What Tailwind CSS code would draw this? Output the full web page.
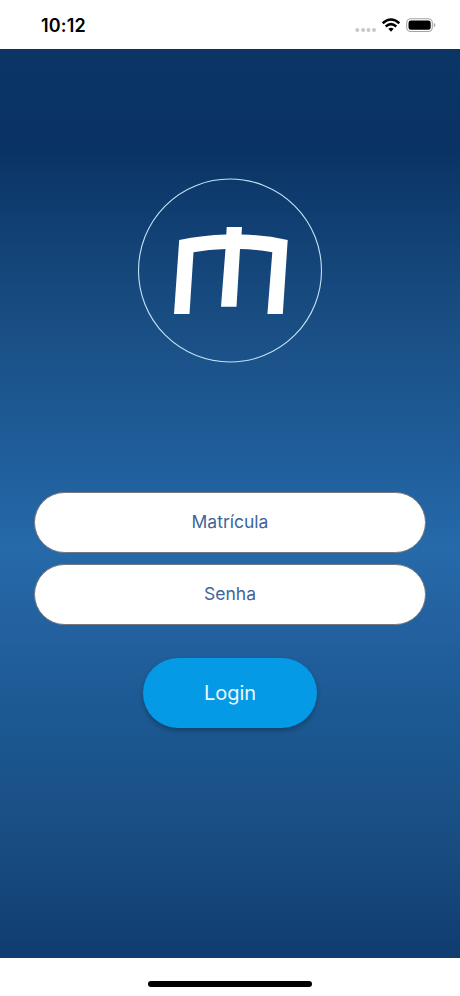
<!DOCTYPE html>
<html lang="pt-BR">
<head>
<meta charset="utf-8">
<title>Login</title>
<script src="https://cdn.jsdelivr.net/npm/@tailwindcss/browser@4"></script>
</head>
<body class="w-[460px] h-[996px] overflow-hidden bg-white font-[Inter,sans-serif] flex flex-col">
<header class="h-[49px] shrink-0 flex items-start justify-between pl-[41px] pr-[24px]">
  <span class="mt-[13px] text-[18px] leading-[25px] font-semibold text-black tracking-[0.15px]">10:12</span>
  <svg class="mt-[15px]" width="81" height="20" viewBox="355 15 81 20">
    <g fill="#c9c9c9"><circle cx="357.3" cy="30" r="2"/><circle cx="363.1" cy="30" r="2"/><circle cx="368.5" cy="30" r="2"/><circle cx="374" cy="30" r="2"/></g>
    <g fill="none" stroke="#000" stroke-width="2.5"><path d="M382.7 23.2Q391 15.8 399.3 23.2"/><path d="M385.7 26.5Q391 21.8 396.3 26.5"/></g>
    <path d="M388.3 28.8Q391 26.8 393.7 28.8L391 31.7Z"/>
    <rect x="406.7" y="18.7" width="25.6" height="12.8" rx="4" fill="none" stroke="#a3a3a3" stroke-width="1.1"/>
    <rect x="408.5" y="20.5" width="22.2" height="9.3" rx="2.4"/>
    <path d="M433.8 23v4.2Q435.4 26.6 435.4 25.1T433.8 23Z" fill="#a3a3a3"/>
  </svg>
</header>
<main class="h-[909px] shrink-0 flex flex-col items-center bg-[linear-gradient(180deg,#0b3565_0%,#0a3363_11%,#0f3c6f_17%,#194e83_30%,#2161a0_48%,#266aa9_55%,#2361a0_63%,#1c5993_73%,#194d82_87%,#103c70_100%)]">
  <svg class="mt-[128px] shrink-0" width="186" height="188" viewBox="137 177 186 188">
    <circle cx="230" cy="270.5" r="91.5" fill="none" stroke="#c4e3f7" stroke-width="1.1"/>
    <path fill="#fff" d="M179.2 240Q203 235 226.3 234.5L226.7 227H242L241.5 234.5Q265 235 287.7 240L282.8 314H267.4L272.3 252.3Q256 249.3 240 249L236.5 306.8H221L225.5 249Q209 249.5 193.5 252.3L189.5 314H174Z"/>
  </svg>
  <form class="mt-[127px] w-[392px] flex flex-col items-center">
    <input type="text" placeholder="Matrícula" aria-label="Matrícula" class="w-full h-[61px] rounded-full border border-[#76777c] bg-white px-6 pb-[3px] text-center text-[17.5px] text-[#3e6599] placeholder:text-[#3e6599] outline-none">
    <input type="password" placeholder="Senha" aria-label="Senha" class="mt-[11px] w-full h-[61px] rounded-full border border-[#76777c] bg-white px-6 pb-[3px] text-center text-[17.5px] text-[#3e6599] placeholder:text-[#3e6599] outline-none">
    <button type="button" class="mt-[33px] w-[174px] h-[70px] rounded-full bg-[#059ae5] text-[20px] text-[#edf8ff] shadow-[0_3px_5px_rgba(0,0,0,0.25)]">Login</button>
  </form>
</main>
<footer class="h-[38px] shrink-0 flex justify-center pt-[23px]">
  <div class="w-[164px] h-[6px] rounded-full bg-black"></div>
</footer>
</body>
</html>
